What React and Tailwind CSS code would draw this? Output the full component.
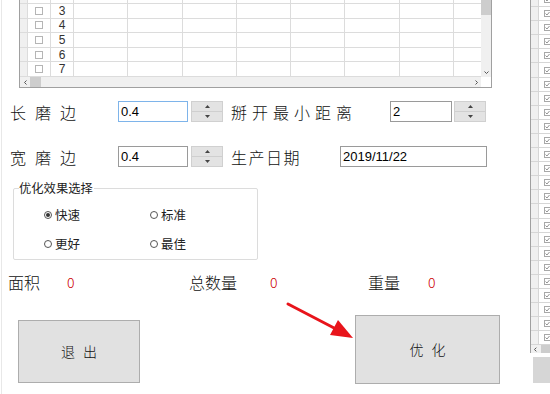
import React from 'react';

const cjk = { fontFamily: '"Noto Sans CJK SC", "Noto Sans", sans-serif' };
const latin = { fontFamily: '"Liberation Sans", Arial, sans-serif' };

function Spinner() {
    return (
        <div className="flex flex-col w-[32px] h-[21px] border border-[#d0d0d0] bg-[#e3e3e3]">
            <div className="flex-1 flex items-center justify-center border-b border-[#cfcfcf]">
                <svg width="5" height="3" viewBox="0 0 5 3"><path d="M2.5 0 L5 3 L0 3 Z" fill="#444" /></svg>
            </div>
            <div className="flex-1 flex items-center justify-center">
                <svg width="5" height="3" viewBox="0 0 5 3"><path d="M0 0 L5 0 L2.5 3 Z" fill="#444" /></svg>
            </div>
        </div>
    );
}

function Radio({ checked, label }) {
    return (
        <div className="flex items-center gap-[3px] text-[12.5px] text-[#222]" style={cjk}>
            <div className="w-[8px] h-[8px] rounded-full border border-[#555] flex items-center justify-center">
                {checked && <div className="w-[4px] h-[4px] rounded-full bg-[#333]" />}
            </div>
            <span className="leading-none">{label}</span>
        </div>
    );
}

function MainGrid() {
    const rows = ['2', '3', '4', '5', '6', '7'];
    const dataCols = [0, 1, 2, 3, 4, 5, 6, 7];
    return (
        <div className="ml-[17px] w-[473px] h-[88px] border-x border-b border-[#a0a0a0] flex flex-col bg-white">
            <div className="flex h-[77px]">
                <div className="flex-1 overflow-hidden">
                    <div className="mt-[-10.6px]">
                        {rows.map((r) => (
                            <div key={r} className="flex h-[14.6px] border-b border-[#dcdcdc]">
                                <div className="w-[8px] shrink-0 bg-[#f0f0f0] border-r border-[#dcdcdc]" />
                                <div className="w-[23px] shrink-0 border-r border-[#dcdcdc] flex items-center justify-center">
                                    <div className="w-[8px] h-[8px] border border-[#b5b5b5] bg-white" />
                                </div>
                                <div className="w-[23px] shrink-0 border-r border-[#dcdcdc] flex items-center justify-center text-[12px] text-[#333]" style={latin}>
                                    {r}
                                </div>
                                {dataCols.map((c) => (
                                    <div key={c} className="w-[54.3px] shrink-0 border-r border-[#dcdcdc]" />
                                ))}
                            </div>
                        ))}
                    </div>
                </div>
                <div className="w-[10px] bg-[#f0f0f0] flex flex-col">
                    <div className="h-[15px] bg-[#cdcdcd]" />
                    <div className="flex-1" />
                    <div className="h-[10px] flex items-center justify-center">
                        <svg width="5" height="3" viewBox="0 0 5 3"><path d="M0.5 0.5 L2.5 2.5 L4.5 0.5" stroke="#555" fill="none" /></svg>
                    </div>
                </div>
            </div>
            <div className="flex h-[10px] bg-[#f0f0f0]">
                <div className="w-[10px] flex items-center justify-center">
                    <svg width="3" height="5" viewBox="0 0 3 5"><path d="M2.5 0.5 L0.5 2.5 L2.5 4.5" stroke="#555" fill="none" /></svg>
                </div>
                <div className="w-[11px] bg-[#cdcdcd]" />
                <div className="flex-1" />
                <div className="w-[10px] flex items-center justify-center">
                    <svg width="3" height="5" viewBox="0 0 3 5"><path d="M0.5 0.5 L2.5 2.5 L0.5 4.5" stroke="#555" fill="none" /></svg>
                </div>
                <div className="w-[10px] bg-white" />
            </div>
        </div>
    );
}

function SideGrid() {
    const rows = Array.from({ length: 25 });
    return (
        <div className="flex flex-col">
            <div className="ml-[3px] w-[20px] h-[353px] border-l border-[#a0a0a0] flex flex-col">
                <div className="h-[345px] overflow-hidden">
                    <div className="mt-[-7px]">
                        {rows.map((_, i) => (
                            <div key={i} className="flex h-[14.1px] border-b border-[#d6d6d6]">
                                <div className="w-[8px] shrink-0 bg-[#f0f0f0] border-r border-[#d6d6d6]" />
                                <div className="flex-1 flex items-center pl-[5px]">
                                    <div className="w-[7px] h-[7px] border border-[#a8a8a8] flex items-center justify-center">
                                        <svg width="5" height="5" viewBox="0 0 5 5"><path d="M0.5 2.5 L2 4 L4.5 1" stroke="#777" strokeWidth="0.8" fill="none" /></svg>
                                    </div>
                                </div>
                            </div>
                        ))}
                    </div>
                </div>
                <div className="h-[8px] bg-[#f0f0f0] flex items-center">
                    <svg className="ml-[3px]" width="3" height="5" viewBox="0 0 3 5"><path d="M2.5 0.5 L0.5 2.5 L2.5 4.5" stroke="#444" fill="none" /></svg>
                    <div className="ml-[4px] w-[10px] h-[8px] bg-[#cdcdcd]" />
                </div>
            </div>
            <div className="ml-[6px] mt-[4px] w-[20px] h-[26px] bg-[#d6d6d6]" />
        </div>
    );
}

export default function App() {
    return (
        <div className="w-[550px] h-[394px] bg-white overflow-hidden flex relative">
            <div className="w-[527px] shrink-0 flex">
                <div className="w-[2px] border-r border-[#e8e8e8]" />
                <div className="flex-1 flex flex-col">
                    <MainGrid />

                    {/* row 1 */}
                    <div className="mt-[13px] flex items-center h-[21px]">
                        <div className="ml-[8px] w-[108px] flex gap-[9px] text-[16px] font-light text-[#111]" style={cjk}>
                            <span>长</span><span>磨</span><span>边</span>
                        </div>
                        <div className="w-[70px] h-[21px] border border-[#7eb4ea] bg-white text-[13px] pl-[2px] flex items-center" style={latin}>0.4</div>
                        <div className="ml-[3px]"><Spinner /></div>
                        <div className="ml-[8px] w-[159px] text-[16px] font-light tracking-[5px] text-[#111]" style={cjk}>掰开最小距离</div>
                        <div className="w-[62px] h-[21px] border border-[#9a9a9a] bg-white text-[13px] pl-[2px] flex items-center" style={latin}>2</div>
                        <div className="ml-[2px]"><Spinner /></div>
                    </div>

                    {/* row 2 */}
                    <div className="mt-[24px] flex items-center h-[21px]">
                        <div className="ml-[8px] w-[108px] flex gap-[9px] text-[16px] font-light text-[#111]" style={cjk}>
                            <span>宽</span><span>磨</span><span>边</span>
                        </div>
                        <div className="w-[70px] h-[21px] border border-[#9a9a9a] bg-white text-[13px] pl-[2px] flex items-center" style={latin}>0.4</div>
                        <div className="ml-[3px]"><Spinner /></div>
                        <div className="ml-[8px] w-[109px] text-[16px] font-light tracking-[1.5px] text-[#111]" style={cjk}>生产日期</div>
                        <div className="w-[147px] h-[21px] border border-[#9a9a9a] bg-white text-[13px] pl-[2px] flex items-center" style={latin}>2019/11/22</div>
                    </div>

                    {/* group */}
                    <div className="relative mt-[21px] ml-[11px] w-[245px] h-[72px] border border-[#dcdcdc] rounded-[2px]">
                        <div className="absolute top-[-9px] left-[5px] bg-white pr-[1px] text-[12.3px] leading-[16px] text-[#222]" style={cjk}>优化效果选择</div>
                        <div className="mt-[20px] ml-[30px] grid grid-cols-[106px_80px] gap-y-[16px]">
                            <Radio checked label="快速" />
                            <Radio label="标准" />
                            <Radio label="更好" />
                            <Radio label="最佳" />
                        </div>
                    </div>

                    {/* stats */}
                    <div className="mt-[12px] flex items-center h-[20px] text-[16px] font-light text-[#111]" style={cjk}>
                        <span className="ml-[6px] w-[59px]">面积</span>
                        <span className="w-[122px] text-[#cc0000] text-[14px]">0</span>
                        <span className="w-[81px]">总数量</span>
                        <span className="w-[98px] text-[#cc0000] text-[14px]">0</span>
                        <span className="w-[60px]">重量</span>
                        <span className="text-[#cc0000] text-[14px]">0</span>
                    </div>

                    {/* buttons */}
                    <div className="flex items-start">
                        <div className="mt-[28px] ml-[16px] w-[122px] h-[63px] bg-[#e1e1e1] border border-[#adadad] flex items-center justify-center text-[14px] font-light tracking-[8px] text-[#111]" style={cjk}>
                            <span className="pl-[8px]">退出</span>
                        </div>
                        <div className="mt-[23px] ml-[215px] w-[145px] h-[69px] bg-[#e1e1e1] border border-[#adadad] flex items-center justify-center text-[14px] font-light tracking-[8px] text-[#111]" style={cjk}>
                            <span className="pl-[8px]">优化</span>
                        </div>
                    </div>
                </div>
            </div>
            <SideGrid />

            {/* annotation arrow */}
            <svg className="absolute left-0 top-0 pointer-events-none" width="550" height="394">
                <line x1="288" y1="304" x2="336" y2="329" stroke="#e8141b" strokeWidth="3" strokeLinecap="round" />
                <polygon points="353,338 330,335 338,320" fill="#e8141b" />
            </svg>
        </div>
    );
}
